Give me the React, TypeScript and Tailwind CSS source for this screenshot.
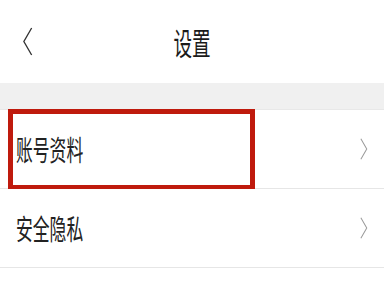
import React from 'react';

const font = { fontFamily: '"Noto Sans CJK SC", "Noto Sans", sans-serif' };

const Chevron = ({ dir, className }: { dir: 'left' | 'right'; className?: string }) => (
  <svg viewBox="0 0 10 28" className={className} fill="none" stroke="currentColor" strokeWidth={1.3}>
    {dir === 'left' ? <path d="M9 1 L1.5 14 L9 27" /> : <path d="M1 1 L8.5 14 L1 27" />}
  </svg>
);

const Row = ({ label, boxed }: { label: string; boxed?: boolean }) => (
  <div className="relative flex h-[79px] items-center justify-between border-b border-[#e6e6e6] bg-white pl-4 pr-4">
    <span className="inline-block origin-left scale-x-[0.6] text-[28px] leading-none text-[#222]" style={font}>
      {label}
    </span>
    <Chevron dir="right" className="h-[22px] w-[8px] text-[#9a9a9a]" />
    {boxed && (
      <div className="absolute left-[8px] top-[-1px] h-[81px] w-[247px] border-[5px] border-[#bf1a0d]" />
    )}
  </div>
);

export default function App() {
  return (
    <div className="h-[288px] w-[384px] overflow-hidden bg-white">
      <div className="relative flex h-[83px] items-center justify-center bg-white">
        <Chevron dir="left" className="absolute left-[22px] top-[27px] h-[29px] w-[11px] text-[#333]" />
        <span className="inline-block scale-x-[0.6] text-[31px] leading-none text-[#1a1a1a]" style={font}>
          设置
        </span>
      </div>
      <div className="h-[27px] border-b border-[#e8e8e8] bg-[#f0f0f0]" />
      <Row label="账号资料" boxed />
      <Row label="安全隐私" />
    </div>
  );
}
